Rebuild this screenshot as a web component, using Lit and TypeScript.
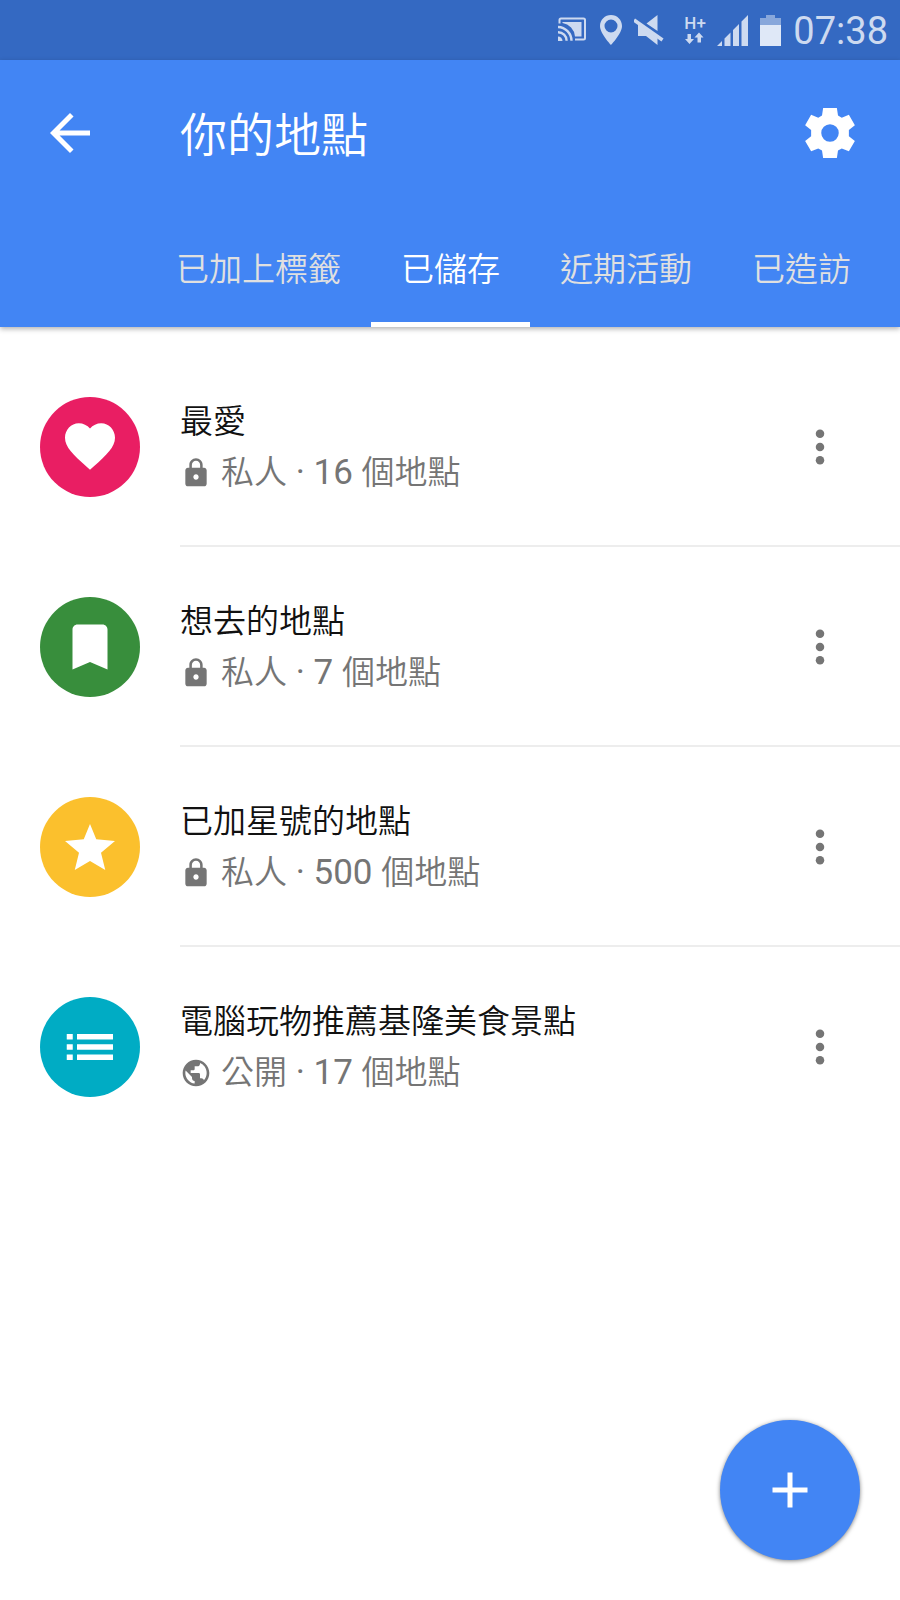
import { LitElement, html, css, svg, type TemplateResult } from "lit";
import { customElement, property, state } from "lit/decorators.js";
import { classMap } from "lit/directives/class-map.js";

type IconName =
  | "back" | "settings" | "more" | "lock" | "globe"
  | "heart" | "bookmark" | "star" | "list" | "add";

const ICONS: Record<IconName, TemplateResult> = {
  back: svg`<path d="M20 11H7.83l5.59-5.59L12 4l-8 8 8 8 1.41-1.41L7.83 13H20v-2z"/>`,
  settings: svg`<path fill-rule="evenodd" d="M9.25 2h5.5l.45 3 1.5.85 2.85-1.15 2.4 4.15-2.4 1.9v2.5l2.4 1.9-2.4 4.15-2.85-1.15-1.5.85-.45 3h-5.5l-.45-3-1.5-.85-2.85 1.15-2.4-4.15 2.4-1.9v-2.5l-2.4-1.9 2.4-4.15 2.85 1.15 1.5-.85zM12 8.500a3.500 3.500 0 1 0 0 7 3.500 3.500 0 0 0 0-7z"/>`,
  more: svg`<circle cx="12" cy="6.67" r="1.7"/><circle cx="12" cy="12" r="1.7"/><circle cx="12" cy="17.33" r="1.7"/>`,
  lock: svg`<path fill-rule="evenodd" d="M18 8h-1V6c0-2.76-2.24-5-5-5S7 3.240 7 6v2H6c-1.100 0-2 .9-2 2v10c0 1.100.9 2 2 2h12c1.100 0 2-.9 2-2V10c0-1.100-.9-2-2-2zm-6 9c-1.100 0-2-.9-2-2s.9-2 2-2 2 .9 2 2-.9 2-2 2zm3.100-9H8.900V6c0-1.710 1.390-3.100 3.100-3.100s3.100 1.390 3.100 3.100v2z"/>`,
  globe: svg`<path d="M12 2C6.480 2 2 6.480 2 12s4.480 10 10 10 10-4.480 10-10S17.520 2 12 2zm-1 17.930c-3.950-.49-7-3.850-7-7.930 0-.62.080-1.210.21-1.790L9 15v1c0 1.100.9 2 2 2v1.930zm6.900-2.540c-.26-.81-1-1.390-1.900-1.390h-1v-3c0-.55-.45-1-1-1H8v-2h2c.55 0 1-.45 1-1V7h2c1.100 0 2-.9 2-2v-.41c2.930 1.190 5 4.060 5 7.410 0 2.080-.8 3.970-2.100 5.390z"/>`,
  heart: svg`<path d="M12 21.100l-1.450-1.320C5.400 15.110 2 12.030 2 8.250 2 5.170 4.420 2.500 7.500 2.500c1.740 0 3.410.81 4.500 2.090 1.090-1.280 2.760-2.090 4.500-2.090 3.080 0 5.500 2.670 5.500 5.750 0 3.780-3.400 6.860-8.550 11.540z"/>`,
  bookmark: svg`<path d="M17 3H7c-1.100 0-2 .9-2 2v16l7-3 7 3V5c0-1.100-.9-2-2-2z"/>`,
  star: svg`<path d="M12 2.800l2.500 6.100 7.500.7-5.600 4.700 1.700 6.900-6.100-3.600-6.100 3.600 1.700-6.900L2 9.600l7.500-.7z"/>`,
  list: svg`<path d="M2.700 6.800h2.400V9H2.700zM2.700 10.900h2.400v2.200H2.700zM2.700 15h2.400v2.200H2.700zM6.800 6.800h14.400V9H6.800zM6.800 10.900h14.400v2.200H6.800zM6.800 15h14.400v2.200H6.800z"/>`,
  add: svg`<path d="M19 13h-6v6h-2v-6H5v-2h6V5h2v6h6v2z"/>`,
};

@customElement("md-icon")
export class MdIcon extends LitElement {
  @property() name: IconName = "add";

  static styles = css`
    :host { display: block; flex: none; width: 60px; height: 60px; }
    svg { display: block; width: 100%; height: 100%; fill: currentColor; }
  `;

  render() {
    return html`<svg viewBox="0 0 24 24" aria-hidden="true">${ICONS[this.name]}</svg>`;
  }
}

@customElement("status-bar")
export class StatusBar extends LitElement {
  static styles = css`
    :host {
      display: flex;
      align-items: center;
      justify-content: flex-end;
      gap: 12px;
      height: 60px;
      padding-right: 12px;
      background: #3469c2;
      color: #cddaf0;
      fill: currentColor;
    }
    svg { display: block; flex: none; }
    .network { width: 21px; }
    .network-type {
      display: block;
      font: 500 17px/17px Roboto, sans-serif;
      white-space: nowrap;
    }
    .time {
      padding-top: 2px;
      font: 400 38px/60px Roboto, sans-serif;
    }
  `;

  render() {
    return html`
      <svg width="30" height="30" viewBox="0 0 30 30" aria-label="Cast">
        <path d="M1.500 8.500V5q0-1.500 1.500-1.500h22.500q1.500 0 1.500 1.500v18q0 1.500-1.500 1.500H17" fill="none" stroke="currentColor" stroke-width="2"/>
        <path d="M4.500 8V7h19v14.500H17A15 15 0 0 0 4.500 8z"/>
        <path d="M0 21.500a4.500 4.500 0 0 1 4.500 4.500H0z"/>
        <path d="M0 17.200a8.500 8.500 0 0 1 8.600 8.600M0 12a14 14 0 0 1 13.500 13.800" fill="none" stroke="currentColor" stroke-width="2.400"/>
      </svg>
      <svg width="22" height="30" viewBox="0 0 22 30" aria-label="Location">
        <path fill-rule="evenodd" d="M11 0C4.900 0 0 4.900 0 11c0 7.500 11 19 11 19s11-11.500 11-19C22 4.900 17.100 0 11 0zm0 4.500a6.500 6.500 0 1 1 0 13 6.500 6.500 0 0 1 0-13z"/>
      </svg>
      <svg width="38" height="30" viewBox="0 0 38 30" aria-label="Muted">
        <path d="M23.500 0v16L12.500 8.500zM4 9l19.500 14v7L12 21H4z"/>
        <path d="M0 5l28.500 20" fill="none" stroke="currentColor" stroke-width="3.600"/>
      </svg>
      <div class="network">
        <span class="network-type">H+</span>
        <svg width="21" height="14" viewBox="0 0 21 14" aria-hidden="true">
          <path d="M3.500 2h3.500v5h3l-4.500 5L1 7h2.500zM13.500 10.500H17v-5h2.500L15 .5l-4.500 5h3z"/>
        </svg>
      </div>
      <svg width="31" height="31" viewBox="0 0 31 31" aria-label="Signal">
        <path d="M0 31l5-5v5zM7.500 23.500l6-6V31h-6zM16 15l6-6v22h-6zM24.500 6.500L31 0v31h-6.500z"/>
      </svg>
      <svg width="21" height="31" viewBox="0 0 21 31" aria-label="Battery">
        <path d="M6 0h9v3h6v8H0V3h6z" opacity=".55"/>
        <path d="M0 10h21v21H0z" fill="#dfe8f7"/>
      </svg>
      <span class="time">07:38</span>
    `;
  }
}

interface PlaceList {
  title: string;
  icon: IconName;
  tone: string;
  shared: boolean;
  count: number;
}

@customElement("place-row")
export class PlaceRow extends LitElement {
  @property({ attribute: false }) list!: PlaceList;
  @property({ type: Boolean, reflect: true }) divided = false;

  static styles = css`
    :host {
      display: flex;
      gap: 40px;
      padding-left: 40px;
      color: #111;
    }
    .badge {
      display: grid;
      place-items: center;
      flex: none;
      width: 100px;
      height: 100px;
      margin-top: 50px;
      border-radius: 50%;
      color: #fff;
    }
    .pink { background: #e91e63; }
    .green { background: #388e3c; }
    .amber { background: #fbc02d; }
    .teal { background: #00acc4; }
    .body {
      display: flex;
      align-items: center;
      flex: 1;
      min-width: 0;
      padding: 49px 50px 47px 0;
      border-bottom: 2px solid transparent;
    }
    :host([divided]) .body { border-color: #ededed; }
    .text { flex: 1; min-width: 0; }
    .title, .meta {
      margin: 0;
      font-size: 33px;
      line-height: 51px;
      font-weight: 350;
    }
    .meta {
      display: flex;
      align-items: center;
      gap: 9px;
      color: #757575;
    }
    .meta md-icon { width: 32px; height: 32px; }
    .latin { font-size: 35px; font-weight: 400; }
    .more {
      display: block;
      padding: 0;
      border: 0;
      background: none;
      color: #757575;
      cursor: pointer;
    }
  `;

  render() {
    const { title, icon, tone, shared, count } = this.list;
    return html`
      <div class="badge ${tone}"><md-icon name=${icon}></md-icon></div>
      <div class="body">
        <div class="text">
          <h2 class="title">${title}</h2>
          <p class="meta">
            <md-icon name=${shared ? "globe" : "lock"}></md-icon>
            <span>${shared ? "公開" : "私人"}<span class="latin"> · ${count} </span>個地點</span>
          </p>
        </div>
        <button class="more" aria-label="更多選項"><md-icon name="more"></md-icon></button>
      </div>
    `;
  }
}

@customElement("app-root")
export class AppRoot extends LitElement {
  @state() private activeTab = 1;

  private tabs = ["已加上標籤", "已儲存", "近期活動", "已造訪"];

  private lists: PlaceList[] = [
    { title: "最愛", icon: "heart", tone: "pink", shared: false, count: 16 },
    { title: "想去的地點", icon: "bookmark", tone: "green", shared: false, count: 7 },
    { title: "已加星號的地點", icon: "star", tone: "amber", shared: false, count: 500 },
    { title: "電腦玩物推薦基隆美食景點", icon: "list", tone: "teal", shared: true, count: 17 },
  ];

  static styles = css`
    :host {
      display: block;
      min-height: 100vh;
      background: #fff;
      font-family: Roboto, "Noto Sans CJK TC", sans-serif;
    }
    button {
      padding: 0;
      border: 0;
      background: none;
      color: inherit;
      font: inherit;
      cursor: pointer;
    }
    .header {
      background: #4285f4;
      color: #fff;
      box-shadow: 0 2px 5px rgba(0, 0, 0, 0.3);
    }
    .toolbar {
      display: flex;
      align-items: center;
      height: 146px;
      padding: 0 40px;
    }
    .title {
      flex: 1;
      margin: 0 0 0 80px;
      padding-top: 6px;
      font-size: 47px;
      font-weight: 350;
      line-height: 60px;
    }
    .tabs {
      display: flex;
      height: 121px;
      padding-left: 146px;
      overflow: hidden;
    }
    .tabs .tab {
      flex: none;
      padding: 12px 30px 0;
      border-bottom: 5px solid transparent;
      color: #e0e0e0;
      font-size: 33px;
      font-weight: 350;
      line-height: 40px;
    }
    .tabs .active { border-color: #fff; color: #fff; }
    .lists { margin: 0; padding: 20px 0 220px; list-style: none; }
    .fab {
      position: fixed;
      right: 40px;
      bottom: 40px;
      display: grid;
      place-items: center;
      width: 140px;
      height: 140px;
      border-radius: 50%;
      background: #4285f4;
      color: #fff;
      box-shadow: 0 1px 4px rgba(0, 0, 0, 0.5);
    }
  `;

  render() {
    return html`
      <status-bar></status-bar>
      <header class="header">
        <div class="toolbar">
          <button aria-label="返回"><md-icon name="back"></md-icon></button>
          <h1 class="title">你的地點</h1>
          <button aria-label="設定"><md-icon name="settings"></md-icon></button>
        </div>
        <div class="tabs" role="tablist">
          ${this.tabs.map((label, i) => html`
            <button
              role="tab"
              class=${classMap({ tab: true, active: i === this.activeTab })}
              aria-selected=${i === this.activeTab}
              @click=${() => (this.activeTab = i)}
            >${label}</button>`)}
        </div>
      </header>
      <ul class="lists">
        ${this.lists.map((list, i) => html`
          <li><place-row .list=${list} ?divided=${i < this.lists.length - 1}></place-row></li>`)}
      </ul>
      <button class="fab" aria-label="新增清單"><md-icon name="add"></md-icon></button>
    `;
  }
}
